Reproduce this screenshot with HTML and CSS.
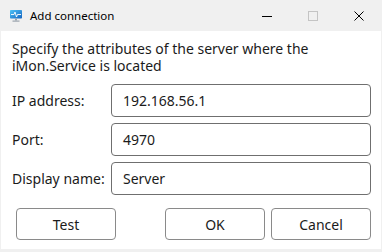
FILE: index.html
```html
<!DOCTYPE html>
<html>
<head>
    <title>Add connection</title>
    <link rel="stylesheet" href="styles.css">
</head>
<body>
    <div class="window">
        <div class="titlebar">
            <svg class="app-icon" width="12" height="12" viewBox="0 0 12 12">
                <defs>
                    <linearGradient id="scr" x1="0" y1="0" x2="1" y2="1">
                        <stop offset="0" stop-color="#4fc3f7"/>
                        <stop offset="1" stop-color="#1565c0"/>
                    </linearGradient>
                </defs>
                <rect x="0" y="0" width="12" height="8.5" rx="0.8" fill="url(#scr)"/>
                <polyline points="1,4.5 4,4.5 5,2 6.5,7 7.5,4.5 11,4.5" fill="none" stroke="#fff" stroke-width="0.9"/>
                <rect x="5" y="8.5" width="2" height="2" fill="#9aa3ad"/>
                <rect x="2.5" y="10.5" width="7" height="1.2" fill="#9aa3ad"/>
            </svg>
            <span class="title">Add connection</span>
            <div class="caption-buttons">
                <span class="cap-btn"><svg width="10" height="10" viewBox="0 0 10 10"><line x1="0" y1="5.5" x2="10" y2="5.5" stroke="#000" stroke-width="1"/></svg></span>
                <span class="cap-btn"><svg width="10" height="10" viewBox="0 0 10 10"><rect x="0.5" y="0.5" width="9" height="9" fill="none" stroke="#c4c4c4" stroke-width="1"/></svg></span>
                <span class="cap-btn"><svg width="10" height="10" viewBox="0 0 10 10"><path d="M0.5 0.5 L9.5 9.5 M9.5 0.5 L0.5 9.5" stroke="#000" stroke-width="1"/></svg></span>
            </div>
        </div>

        <div class="content">
            <p class="intro">Specify the attributes of the server where the iMon.Service is located</p>

            <div class="fields">
                <label>IP address:</label>
                <div class="input">192.168.56.1</div>
                <label>Port:</label>
                <div class="input">4970</div>
                <label>Display name:</label>
                <div class="input">Server</div>
            </div>

            <div class="actions">
                <button class="test-btn">Test</button>
                <button>OK</button>
                <button>Cancel</button>
            </div>
        </div>
    </div>
</body>
</html>
```

FILE: styles.css
```css
* {
    margin: 0;
    padding: 0;
    box-sizing: border-box;
    font-family: 'Noto Sans', 'Open Sans', sans-serif;
}

body {
    background: #f0f0f0;
}

.window {
    width: 382px;
    height: 252px;
    display: flex;
    flex-direction: column;
    background: #f0f0f0;
}

.titlebar {
    height: 31px;
    display: flex;
    align-items: center;
    padding-left: 10px;
}

.app-icon {
    margin-right: 8px;
}

.title {
    font-size: 11.5px;
    color: #000;
}

.caption-buttons {
    margin-left: auto;
    display: flex;
}

.cap-btn {
    width: 46px;
    height: 31px;
    display: flex;
    align-items: center;
    justify-content: center;
}

.content {
    flex: 1;
    background: #fff;
    margin: 0 1px 3px 1px;
    padding: 9px 10px 0 11px;
    color: #1b1b1b;
}

.intro {
    font-size: 14px;
    line-height: 17px;
    margin-bottom: 10px;
}

.fields {
    display: grid;
    grid-template-columns: 99px 1fr;
    row-gap: 6px;
    align-items: center;
}

.fields label {
    font-size: 14px;
}

.input {
    height: 33px;
    border: 1px solid #6f6f6f;
    border-radius: 4px;
    padding-left: 11px;
    display: flex;
    align-items: center;
    font-size: 14px;
}

.actions {
    display: flex;
    gap: 6px;
    margin-top: 13px;
    padding-left: 4px;
}

.actions button {
    width: 100px;
    height: 32px;
    background: #fff;
    border: 1px solid #8a8a8a;
    border-radius: 4px;
    font-size: 14px;
    color: #1b1b1b;
}

.actions .test-btn {
    margin-right: auto;
}
```
